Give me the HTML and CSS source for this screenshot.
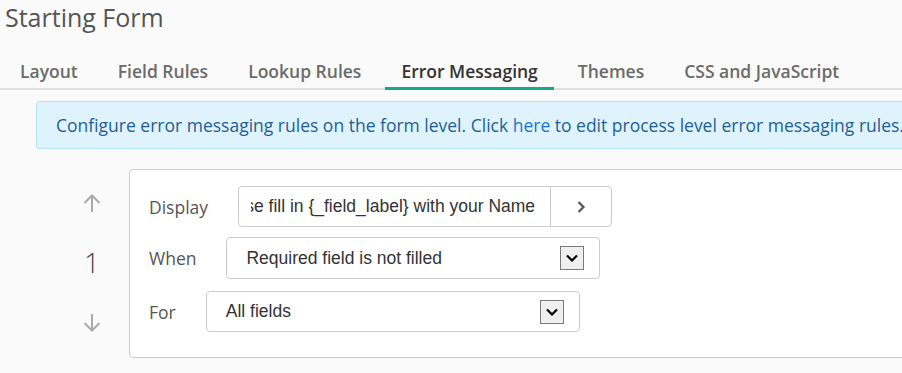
FILE: index.html
```html
<!DOCTYPE html>
<html lang="en">
<head>
<meta charset="utf-8">
<title>Starting Form</title>
<link rel="stylesheet" href="styles.css">
</head>
<body>
<div class="page">
  <h1 class="title">Starting Form</h1>
  <nav class="tabs">
    <a class="tab">Layout</a>
    <a class="tab">Field Rules</a>
    <a class="tab">Lookup Rules</a>
    <a class="tab active">Error Messaging</a>
    <a class="tab">Themes</a>
    <a class="tab">CSS and JavaScript</a>
  </nav>
  <div class="alert">Configure error messaging rules on the form level. Click <a class="link">here</a> to edit process level error messaging rules.</div>
  <div class="rule">
    <div class="order">
      <svg class="arrow" width="20" height="20" viewBox="0 0 20 20"><path d="M10 19V2.5M2.5 10L10 2.5L17.5 10" fill="none" stroke="#aaa" stroke-width="2"/></svg>
      <span class="num">1</span>
      <svg class="arrow" width="20" height="20" viewBox="0 0 20 20"><path d="M10 1V17.5M2.5 10L10 17.5L17.5 10" fill="none" stroke="#aaa" stroke-width="2"/></svg>
    </div>
    <div class="card">
      <div class="row">
        <span class="label">Display</span>
        <div class="group">
          <div class="text"><div class="clip"><span>Please fill in {_field_label} with your Name</span></div></div>
          <div class="btn"><svg width="12" height="14" viewBox="0 0 12 14"><path d="M3.5 2L8.5 7L3.5 12" fill="none" stroke="#555" stroke-width="2.2"/></svg></div>
        </div>
      </div>
      <div class="row row-when">
        <span class="label">When</span>
        <div class="select"><span>Required field is not filled</span><span class="caret"><svg width="14" height="10" viewBox="0 0 14 10"><path d="M2 2.5L7 7.5L12 2.5" fill="none" stroke="#000" stroke-width="2.2"/></svg></span></div>
      </div>
      <div class="row row-for">
        <span class="label">For</span>
        <div class="select"><span>All fields</span><span class="caret"><svg width="14" height="10" viewBox="0 0 14 10"><path d="M2 2.5L7 7.5L12 2.5" fill="none" stroke="#000" stroke-width="2.2"/></svg></span></div>
      </div>
    </div>
  </div>
</div>
</body>
</html>
```
FILE: styles.css
```css
html, body {
  margin: 0;
  padding: 0;
  background: #fafafa;
  overflow: hidden;
}
.page {
  width: 1200px;
  font-family: "Open Sans", sans-serif;
}
.title {
  margin: 1px 0 0 5px;
  font-size: 25px;
  line-height: 32px;
  font-weight: 400;
  color: #555;
}
.tabs {
  display: flex;
  gap: 8px;
  margin-top: 26px;
  padding-left: 4px;
  border-bottom: 2px solid #e0e0e0;
}
.tab {
  display: block;
  padding: 0 16px 4px;
  margin-bottom: -2px;
  font-size: 17.5px;
  line-height: 24px;
  font-weight: 600;
  color: #6b6b6b;
  border-bottom: 3px solid transparent;
}
.tab.active {
  color: #333;
  border-bottom-color: #14a88c;
}
.alert {
  margin: 11px 0 0 36px;
  height: 46px;
  box-sizing: content-box;
  padding: 0 0 0 19px;
  background: #dff3fd;
  border: 1px solid #b6e2f8;
  border-radius: 3px;
  font-size: 17.5px;
  line-height: 46px;
  color: #1f5e97;
  white-space: nowrap;
}
.link {
  color: #1a74c9;
}
.rule {
  display: flex;
  margin: 20px 0 0 72px;
  gap: 17px;
}
.order {
  width: 40px;
  display: flex;
  flex-direction: column;
  align-items: center;
  justify-content: space-between;
  padding: 24px 0 25px;
}
.arrow {
  display: block;
}
.num {
  font-size: 27px;
  font-weight: 300;
  line-height: 30px;
  color: #444;
}
.card {
  flex: 1;
  background: #fff;
  border: 1px solid #ccc;
  border-radius: 4px;
  padding: 16px 20px 25px 19px;
}
.row {
  display: flex;
  align-items: center;
}
.row-when {
  margin-top: 10px;
}
.row-for {
  margin-top: 12px;
}
.label {
  font-size: 17.5px;
  color: #555;
  margin-right: 30px;
}
.group {
  display: flex;
  width: 374px;
  height: 41px;
  box-sizing: border-box;
  border: 1px solid #ccc;
  border-radius: 4px;
  background: #fff;
}
.text {
  flex: 1;
  min-width: 0;
  padding: 0 15px 0 12px;
  display: flex;
  align-items: center;
}
.clip {
  flex: 1;
  min-width: 0;
  overflow: hidden;
  display: flex;
  justify-content: flex-end;
  white-space: nowrap;
  font-family: "Liberation Sans", Arial, sans-serif;
  font-size: 17.5px;
  color: #333;
}
.clip span {
  flex: none;
}
.btn {
  width: 60px;
  border-left: 1px solid #ccc;
  display: flex;
  align-items: center;
  justify-content: center;
}
.select {
  width: 374px;
  height: 42px;
  box-sizing: border-box;
  border: 1px solid #ccc;
  border-radius: 4px;
  background: #fff;
  display: flex;
  align-items: center;
  justify-content: space-between;
  padding: 0 15px 0 19px;
  font-family: "Liberation Sans", Arial, sans-serif;
  font-size: 17.5px;
  color: #333;
}
.row-for .select {
  height: 41px;
}
.caret {
  width: 24px;
  height: 24px;
  box-sizing: border-box;
  border: 1px solid #7a7a7a;
  background: #efefef;
  display: flex;
  align-items: center;
  justify-content: center;
}
```
